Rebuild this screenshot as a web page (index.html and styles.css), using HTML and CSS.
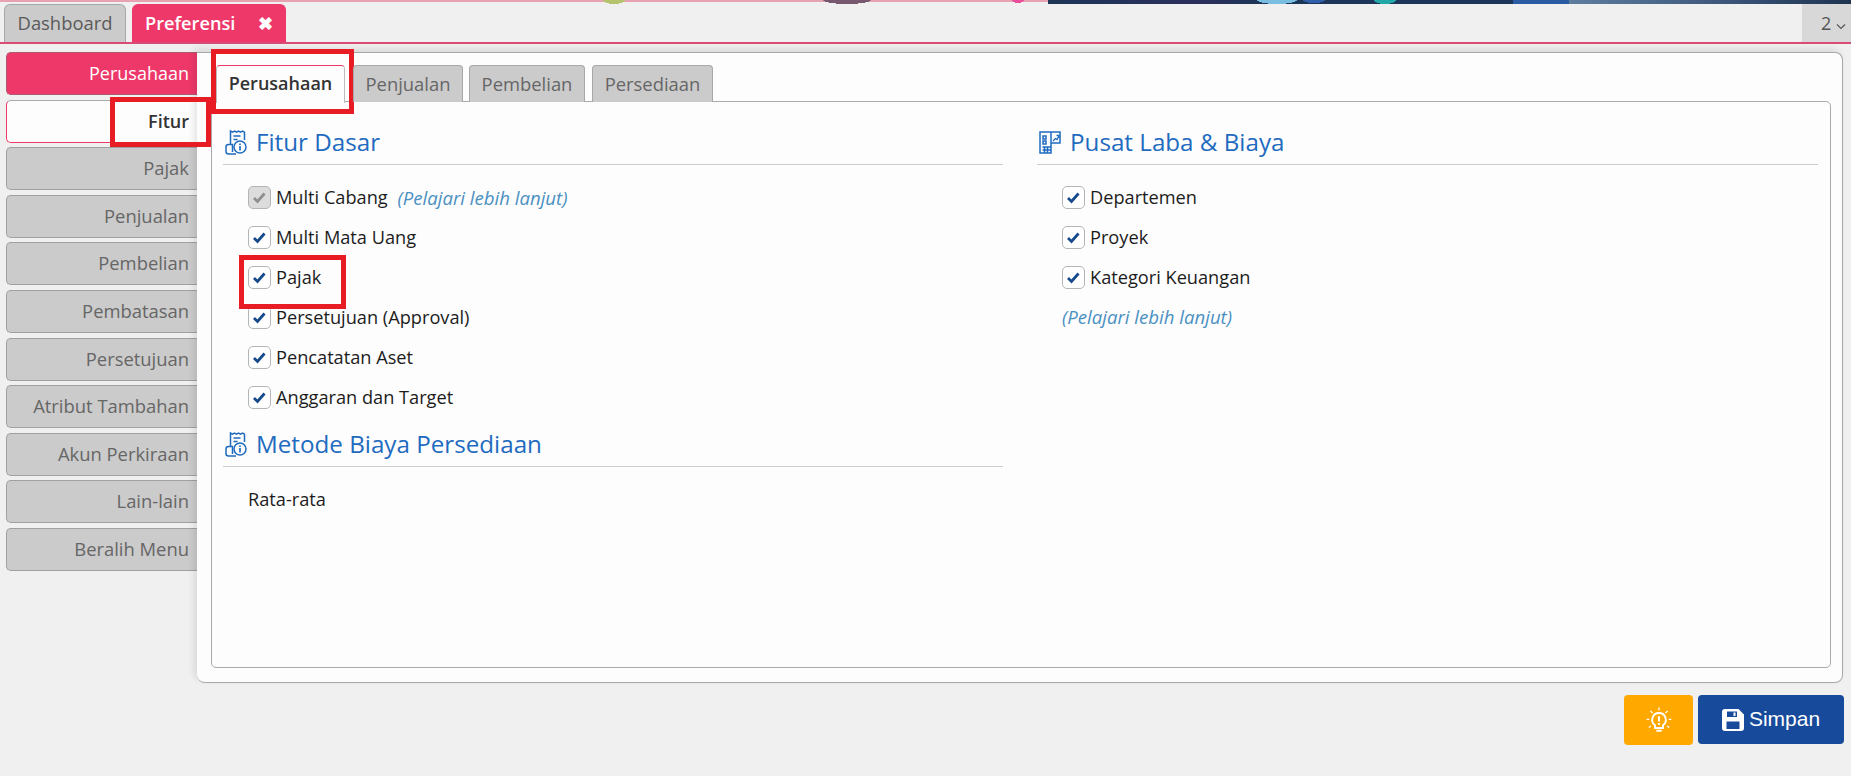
FILE: index.html
```html
<!DOCTYPE html>
<html lang="id">
<head>
<meta charset="utf-8">
<title>Preferensi</title>
<link rel="stylesheet" href="styles.css">
</head>
<body>
<div class="topstrip"></div>
<header class="tabbar">
  <div class="tab">Dashboard</div>
  <div class="tab tab-active">Preferensi <span class="tab-close">✖</span></div>
  <div class="tab-more">2 <svg width="10" height="7" viewBox="0 0 10 7"><path d="M1 1.500l4 4 4-4" fill="none" stroke="#555" stroke-width="1.100"/></svg></div>
</header>
<div class="workspace">
  <nav class="side">
    <div class="side-item side-primary">Perusahaan</div>
    <div class="side-item side-current">Fitur</div>
    <div class="side-item">Pajak</div>
    <div class="side-item">Penjualan</div>
    <div class="side-item">Pembelian</div>
    <div class="side-item">Pembatasan</div>
    <div class="side-item">Persetujuan</div>
    <div class="side-item">Atribut Tambahan</div>
    <div class="side-item">Akun Perkiraan</div>
    <div class="side-item">Lain-lain</div>
    <div class="side-item">Beralih Menu</div>
  </nav>
  <main class="card">
    <div class="subtabs">
      <div class="subtab subtab-active">Perusahaan</div>
      <div class="subtab">Penjualan</div>
      <div class="subtab">Pembelian</div>
      <div class="subtab">Persediaan</div>
    </div>
    <div class="panel">
      <section class="col">
        <h2 class="heading">
          <svg class="h-icon" viewBox="0 0 24 26"><path d="M6.500 15.500V2l2 1.200L10.500 2l2 1.200L14.500 2l2 1.200L18.500 2l2 1.200V11M9.500 7h7M9.500 10.500h4M4.500 15.500h4v7.500M4.500 15.500C3 15.500 2 16.500 2 18v4.500c0 1.500 1 2.500 2.500 2.500H12" fill="none" stroke="#1f6bc0" stroke-width="1.500"/><circle cx="16" cy="18" r="6" fill="none" stroke="#1f6bc0" stroke-width="1.500"/><path d="M16 17v4.500M16 14.500v1.500" stroke="#1f6bc0" stroke-width="1.700"/></svg>
          Fitur Dasar
        </h2>
        <ul class="checks">
          <li class="check"><span class="box box-off"><svg viewBox="0 0 21 21"><path d="M5 11l3.500 3.500 7-8" fill="none" stroke="#8f8f8f" stroke-width="2.800"/></svg></span>Multi Cabang <em class="learn">(Pelajari lebih lanjut)</em></li>
          <li class="check"><span class="box"><svg viewBox="0 0 21 21"><path d="M5 11l3.500 3.500 7-8" fill="none" stroke="#174a8c" stroke-width="2.800"/></svg></span>Multi Mata Uang</li>
          <li class="check"><span class="box"><svg viewBox="0 0 21 21"><path d="M5 11l3.500 3.500 7-8" fill="none" stroke="#174a8c" stroke-width="2.800"/></svg></span>Pajak</li>
          <li class="check"><span class="box"><svg viewBox="0 0 21 21"><path d="M5 11l3.500 3.500 7-8" fill="none" stroke="#174a8c" stroke-width="2.800"/></svg></span>Persetujuan (Approval)</li>
          <li class="check"><span class="box"><svg viewBox="0 0 21 21"><path d="M5 11l3.500 3.500 7-8" fill="none" stroke="#174a8c" stroke-width="2.800"/></svg></span>Pencatatan Aset</li>
          <li class="check"><span class="box"><svg viewBox="0 0 21 21"><path d="M5 11l3.500 3.500 7-8" fill="none" stroke="#174a8c" stroke-width="2.800"/></svg></span>Anggaran dan Target</li>
        </ul>
        <h2 class="heading heading-second">
          <svg class="h-icon" viewBox="0 0 24 26"><path d="M6.500 15.500V2l2 1.200L10.500 2l2 1.200L14.500 2l2 1.200L18.500 2l2 1.200V11M9.500 7h7M9.500 10.500h4M4.500 15.500h4v7.500M4.500 15.500C3 15.500 2 16.500 2 18v4.500c0 1.500 1 2.500 2.500 2.500H12" fill="none" stroke="#1f6bc0" stroke-width="1.500"/><circle cx="16" cy="18" r="6" fill="none" stroke="#1f6bc0" stroke-width="1.500"/><path d="M16 17v4.500M16 14.500v1.500" stroke="#1f6bc0" stroke-width="1.700"/></svg>
          Metode Biaya Persediaan
        </h2>
        <p class="plain">Rata-rata</p>
      </section>
      <section class="col">
        <h2 class="heading">
          <svg class="h-icon" viewBox="0 0 24 26"><path d="M2 3h11v21H2zM13 3h9v11h-9M5 7h3v3H5zM5 12h3v3H5zM4.500 18h8M4.500 21h8M6.500 18v6M9.500 18v6" fill="none" stroke="#1f6bc0" stroke-width="1.500"/><path d="M15 12l2.500-2.500 1.500 1L21 7M18.500 6.500H21V9" fill="none" stroke="#1f6bc0" stroke-width="1.300"/></svg>
          Pusat Laba &amp; Biaya
        </h2>
        <ul class="checks">
          <li class="check"><span class="box"><svg viewBox="0 0 21 21"><path d="M5 11l3.500 3.500 7-8" fill="none" stroke="#174a8c" stroke-width="2.800"/></svg></span>Departemen</li>
          <li class="check"><span class="box"><svg viewBox="0 0 21 21"><path d="M5 11l3.500 3.500 7-8" fill="none" stroke="#174a8c" stroke-width="2.800"/></svg></span>Proyek</li>
          <li class="check"><span class="box"><svg viewBox="0 0 21 21"><path d="M5 11l3.500 3.500 7-8" fill="none" stroke="#174a8c" stroke-width="2.800"/></svg></span>Kategori Keuangan</li>
          <li class="check check-link"><em class="learn">(Pelajari lebih lanjut)</em></li>
        </ul>
      </section>
    </div>
  </main>
</div>
<footer class="actions">
  <button class="btn btn-tip"><svg width="28" height="28" viewBox="0 0 26 26"><path d="M13 6.500a6.300 6.300 0 0 0-3.700 11.400V20.500h7.400v-2.600A6.300 6.300 0 0 0 13 6.500zM10.500 23h5" fill="none" stroke="#fff" stroke-width="1.800"/><path d="M13 9.500v5M13 15.700v1.800" stroke="#fff" stroke-width="2"/><path d="M13 1.500v2.500M5 4.500l2 2M21 4.500l-2 2M1.500 12.500h2.500M24.500 12.500H22M3.500 20l2-1.500M22.500 20l-2-1.500" stroke="#fff" stroke-width="1.200"/></svg></button>
  <button class="btn btn-save"><svg width="22" height="22" viewBox="0 0 22 22"><path fill-rule="evenodd" d="M3 0h13.500L22 5.500V19a3 3 0 0 1-3 3H3a3 3 0 0 1-3-3V3a3 3 0 0 1 3-3zM5 2.500V8h10V2.500zM4.500 12.500V20h13v-7.500zM11.500 3.500h2V7h-2z" fill="#fff"/></svg><span class="btn-label">Simpan</span></button>
</footer>
<div class="mark mark-fitur"></div>
<div class="mark mark-tab"></div>
<div class="mark mark-pajak"></div>
</body>
</html>
```
FILE: styles.css
```css
* { box-sizing: border-box; }
html, body { margin: 0; height: 100%; }
body {
  width: 1851px;
  height: 776px;
  overflow: hidden;
  position: relative;
  background: #f0f0f0;
  font-family: "Open Sans", "Noto Sans", sans-serif;
  font-size: 18.200px;
  color: #1c1c1c;
}
.topstrip {
  height: 4px;
  background:
    radial-gradient(ellipse 11px 4px at 614px 0, #b5c46c 98%, transparent 100%) no-repeat,
    radial-gradient(ellipse 24px 4px at 847px 0, #77586f 98%, transparent 100%) no-repeat,
    radial-gradient(ellipse 6px 3px at 1018px 0, #ec4d9a 98%, transparent 100%) no-repeat,
    radial-gradient(ellipse 20px 4px at 1277px 0, #79bde0 98%, transparent 100%) no-repeat,
    radial-gradient(ellipse 11px 3px at 1314px 0, #2f5fa8 98%, transparent 100%) no-repeat,
    radial-gradient(ellipse 11px 4px at 1385px 0, #22a8a8 98%, transparent 100%) no-repeat,
    linear-gradient(90deg, transparent 1048px, #1d3556 1048px, #2b2f5c 1200px, #1d3556 1260px, #1d3556 1513px, #2a5ba3 1513px, #2a5ba3 1569px, #5f7d9d 1569px, #3d587c 1720px, #1d3350 1851px) no-repeat,
    linear-gradient(#e8a3b3, #e8a3b3) 0 0 / 1048px 2px no-repeat;
}
.tabbar {
  height: 40px;
  display: flex;
  gap: 6px;
  padding-left: 4px;
  border-bottom: 2px solid #d84d75;
  background: #f0f0f0;
}
.tab {
  width: 122px;
  height: 38px;
  background: #cbcbcb;
  border: 1px solid #a8a8a8;
  border-bottom: 0;
  border-radius: 6px 6px 0 0;
  color: #5a5a5a;
  font-size: 18.400px;
  line-height: 36px;
  text-align: center;
}
.tab-active {
  width: 154px;
  background: #ee386a;
  border-color: #ee386a;
  color: #fff;
  font-weight: 600;
  font-size: 18.200px;
  text-align: left;
  padding-left: 12px;
}
.tab-close { font-size: 18px; margin-left: 18px; }
.tab-more {
  margin-left: auto;
  width: 49px;
  height: 38px;
  background: #d8d8d8;
  color: #555;
  font-size: 18px;
  line-height: 38px;
  text-align: right;
  padding-right: 5px;
}
.workspace {
  display: flex;
  height: 631px;
  margin-top: 8px;
}
.side {
  width: 197px;
  padding-left: 6px;
  display: flex;
  flex-direction: column;
  gap: 4.600px;
}
.side-item {
  height: 43px;
  flex: none;
  background: #cbcbcb;
  border: 1px solid #a0a0a0;
  border-right: 0;
  border-radius: 5px 0 0 5px;
  color: #666;
  font-size: 18.400px;
  line-height: 40px;
  text-align: right;
  padding-right: 8px;
}
.side-primary { background: #ee386a; border-color: #b05a72; color: #fff; font-size: 18px; }
.side-current { background: #fdfdfd; border-color: #aaa #fff #ee386a #ee386a; color: #333; font-weight: 600; font-size: 18px; }
.card {
  width: 1646px;
  background: #fdfdfd;
  border: 1px solid #a8a8a8;
  border-left: 0;
  border-radius: 0 8px 8px 8px;
  box-shadow: -3px -3px 7px rgba(0,0,0,.1);
  padding: 12px 11px 14px 14px;
  display: flex;
  flex-direction: column;
  position: relative;
}
.subtabs { display: flex; gap: 6px; padding-left: 5px; height: 36px; flex: none; }
.subtab {
  height: 37px;
  width: 116px;
  background: #cbcbcb;
  border: 1px solid #a8a8a8;
  border-bottom: 0;
  border-radius: 4px 4px 0 0;
  color: #666;
  font-size: 18.400px;
  line-height: 35px;
  text-align: center;
  position: relative;
  z-index: 1;
}
.subtab:nth-child(2) { width: 110px; margin-left: 2px; }
.subtab:nth-child(4) { width: 121px; margin-left: 1px; }
.subtab-active {
  width: 129px;
  background: #fdfdfd;
  border-color: #ee386a #bbb #fdfdfd;
  color: #333;
  font-weight: 600;
  font-size: 18px;
  height: 38px;
}
.panel {
  flex: 1;
  border: 1px solid #aaa;
  border-radius: 0 5px 5px 5px;
  padding: 0 11px;
  display: grid;
  grid-template-columns: 780px 781px;
  column-gap: 34px;
}
.col { min-width: 0; }
.heading {
  margin: 0;
  height: 63px;
  padding-top: 17px;
  padding-left: 1px;
  border-bottom: 1px solid #c9ccd0;
  color: #1f6bc0;
  font-size: 24.200px;
  font-weight: 400;
  line-height: 32px;
  display: flex;
  align-items: center;
  gap: 8px;
}
.heading-second { height: 50px; padding-top: 5px; }
.h-icon { width: 24px; height: 26px; flex: none; }
.checks { list-style: none; margin: 12px 0 0; padding: 0 0 0 25px; }
.check {
  height: 40px;
  display: flex;
  align-items: center;
  gap: 5px;
  white-space: pre;
}
.check-link { padding-bottom: 2px; }
.box {
  width: 23px;
  height: 23px;
  flex: none;
  background: #fff;
  border: 1px solid #b5b5b5;
  border-radius: 5px;
  display: block;
}
.box svg { display: block; width: 21px; height: 21px; }
.box-off { background: #dcdcdc; }
.learn { color: #4a90c2; font-style: italic; font-size: 18.600px; }
.plain { margin: 20px 0 0 25px; line-height: 24px; }
.actions {
  position: absolute;
  right: 7px;
  top: 695px;
  display: flex;
  gap: 5px;
}
.btn {
  border: 0;
  height: 49px;
  border-radius: 4px;
  color: #fff;
  font-family: "Liberation Sans", Arial, sans-serif;
  font-size: 21px;
  display: flex;
  align-items: center;
  justify-content: center;
  gap: 5px;
  padding: 0;
}
.btn-label { padding-bottom: 2px; }
.btn-tip { width: 69px; background: #ffa800; height: 50px; }
.btn-save { width: 146px; background: #174a9a; }
.mark { position: absolute; border: 5px solid #e81c24; pointer-events: none; }
.mark-fitur { left: 110px; top: 97px; width: 101px; height: 50px; }
.mark-tab { left: 211px; top: 49px; width: 143px; height: 65px; }
.mark-pajak { left: 239px; top: 255px; width: 107px; height: 54px; }
```
